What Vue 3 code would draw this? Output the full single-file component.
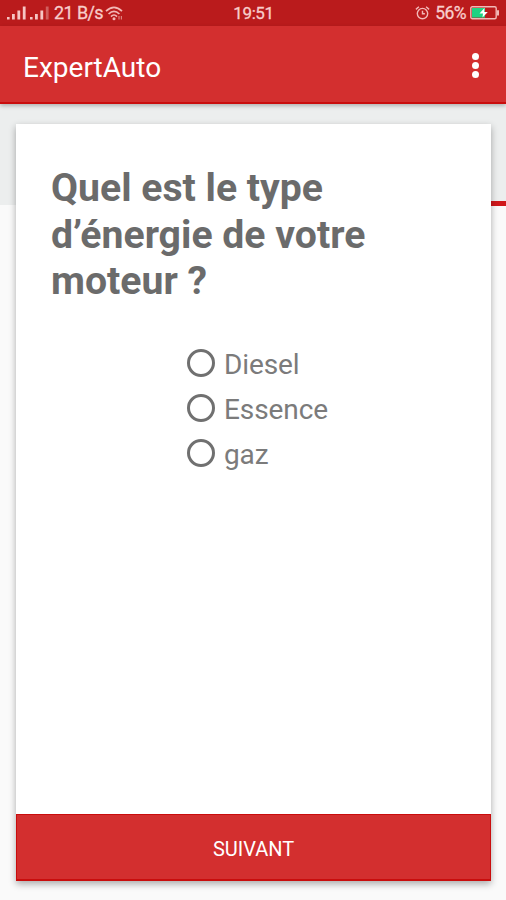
<template>
  <div class="screen">
    <header class="status-bar">
      <div class="status-left">
        <svg class="signal" width="44" height="14" viewBox="0 0 44 14">
          <g fill="#f6c5c3">
            <rect x="0" y="11" width="2.6" height="2.5" />
            <rect x="5" y="8" width="2.8" height="5.5" />
            <rect x="10.4" y="4.5" width="2.8" height="9" />
            <rect x="15.8" y="0.5" width="2.8" height="13" />
            <rect x="23" y="11" width="2.6" height="2.5" />
            <rect x="28" y="8" width="2.8" height="5.5" />
            <rect x="33.4" y="4.5" width="2.8" height="9" />
            <rect x="38.8" y="0.5" width="2.8" height="13" opacity="0.4" />
          </g>
        </svg>
        <span class="speed">21 B/s</span>
        <svg class="wifi" width="19" height="15" viewBox="0 0 19 15">
          <g fill="none" stroke="#f2b9b7" stroke-width="1.7">
            <path d="M1 5.2 Q9 -2.6 17 5.2" />
            <path d="M3.6 8 Q9 2.6 14.4 8" />
            <path d="M6 10.6 Q9 7.4 12 10.6" />
          </g>
          <circle cx="9" cy="12.8" r="1.5" fill="#f2b9b7" />
          <path d="M14 10v3.5M16.4 10v3.5" stroke="#dd807d" stroke-width="1.2" />
        </svg>
      </div>
      <span class="clock">19:51</span>
      <div class="status-right">
        <svg class="alarm" width="15" height="14" viewBox="0 0 14 14" fill="none" stroke="#f2b9b7" stroke-width="1.4">
          <circle cx="7" cy="7.6" r="5.2" />
          <path d="M7 4.8v3h2.4M0.4 3.4L3.4 0.8M13.6 3.4L10.6 0.8" />
        </svg>
        <span class="percent">56%</span>
        <svg class="battery" width="30" height="14" viewBox="0 0 30 14">
          <rect x="0.8" y="0.8" width="25.4" height="12" rx="1.5" fill="none" stroke="#f2b9b7" stroke-width="1.4" />
          <rect x="2" y="2" width="13" height="9.6" fill="#1fd382" />
          <path d="M28 4.2v5.2" stroke="#f2b9b7" stroke-width="2" />
          <path d="M14.5 2L9.5 7.6H13L12.5 11.6L17.8 6H14.2Z" fill="#fff" />
        </svg>
      </div>
    </header>

    <nav class="app-bar">
      <h1>ExpertAuto</h1>
      <button class="menu" aria-label="Menu">
        <i></i><i></i><i></i>
      </button>
    </nav>

    <main class="content">
      <section class="card">
        <h2>Quel est le type d’énergie de votre moteur ?</h2>
        <div class="options">
          <label v-for="option in options" :key="option" class="option">
            <input v-model="energy" type="radio" name="energy" :value="option" />
            <span>{{ option }}</span>
          </label>
        </div>
        <button class="next">SUIVANT</button>
      </section>
    </main>
  </div>
</template>

<script setup>
import { ref } from 'vue'

const options = ['Diesel', 'Essence', 'gaz']
const energy = ref(null)
</script>

<style>
body {
  margin: 0;
  background: #fafafa;
}
</style>

<style scoped>
.screen {
  display: flex;
  flex-direction: column;
  width: 506px;
  height: 900px;
  overflow: hidden;
  font-family: Roboto, "Liberation Sans", sans-serif;
}
.status-bar {
  display: grid;
  grid-template-columns: 1fr auto 1fr;
  align-items: center;
  box-sizing: border-box;
  height: 26px;
  padding: 0 6px 0 7px;
  background: #ba1b1c;
  color: #f8cdcb;
  font-size: 18px;
  line-height: 26px;
}
.status-left,
.status-right {
  display: flex;
  align-items: center;
}
.status-right {
  justify-content: flex-end;
}
.speed {
  margin-left: 3px;
  letter-spacing: -0.6px;
  -webkit-text-stroke: 0.3px;
}
.wifi {
  margin-left: 2px;
}
.clock {
  font-size: 17px;
  letter-spacing: -0.4px;
  -webkit-text-stroke: 0.3px;
}
.percent {
  margin: 0 4px 0 5px;
  font-size: 17.5px;
  letter-spacing: -0.6px;
  -webkit-text-stroke: 0.3px;
}
.app-bar {
  position: relative;
  z-index: 1;
  display: flex;
  align-items: center;
  justify-content: space-between;
  box-sizing: border-box;
  height: 78px;
  padding: 0 27px 0 23px;
  background: #d32f2f;
  border-bottom: 2px solid #c90d0d;
  box-shadow: 0 2px 4px rgba(0, 0, 0, 0.25);
}
h1 {
  margin: 7px 0 0;
  color: #fff;
  font-size: 28px;
  font-weight: 400;
  line-height: 34px;
}
.menu {
  display: flex;
  flex-direction: column;
  gap: 2px;
  margin-top: 3px;
  padding: 0;
  background: none;
  border: none;
}
.menu i {
  width: 7px;
  height: 7px;
  background: #fff;
  border-radius: 50%;
}
.content {
  flex: 1;
  display: flex;
  padding: 20px 15px 19px 16px;
  /* bandeau gris, avec le trait rouge visible à droite de la carte */
  background:
    linear-gradient(#d0181b, #d0181b) right 97px / 16px 5px no-repeat,
    linear-gradient(#eceeee, #eceeee) 0 0 / 100% 101px no-repeat,
    #fafafa;
}
.card {
  flex: 1;
  display: flex;
  flex-direction: column;
  background: #fff;
  box-shadow: 0 3px 7px rgba(0, 0, 0, 0.32);
}
h2 {
  margin: 41px 100px 0 35px;
  color: #6b6b6b;
  font-size: 39.2px;
  font-weight: 700;
  line-height: 46.6px;
}
.options {
  display: flex;
  flex-direction: column;
  margin: 36px 0 0 171px;
}
.option {
  display: flex;
  align-items: center;
  gap: 9px;
  height: 45px;
  color: #7b7b7b;
  font-size: 28px;
}
.option input {
  appearance: none;
  box-sizing: border-box;
  width: 28px;
  height: 28px;
  margin: 0;
  border: 3px solid #707070;
  border-radius: 50%;
}
.option input:checked {
  background: #d32f2f;
}
.option span {
  padding-top: 3px;
  letter-spacing: -0.1px;
}
.next {
  height: 67px;
  margin-top: auto;
  padding: 4px 0 0;
  background: #d32f2f;
  border: 1px solid #c90d0d;
  border-bottom-width: 2px;
  color: #fff;
  font-family: inherit;
  font-size: 20px;
}
</style>
